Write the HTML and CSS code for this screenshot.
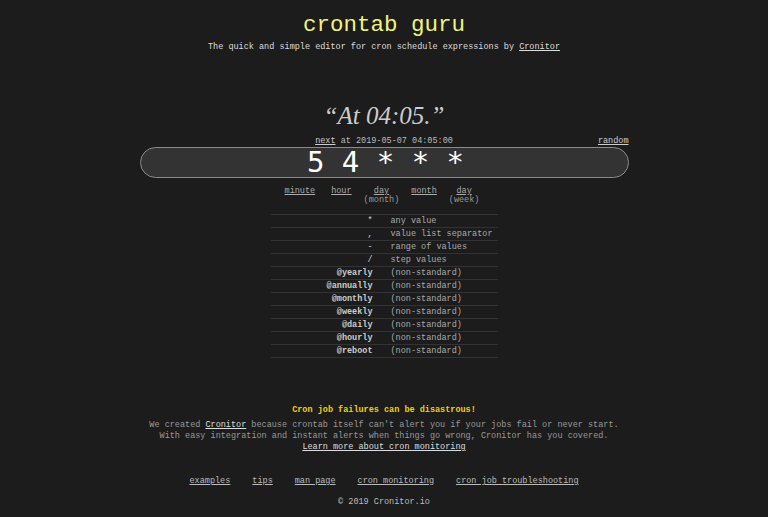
FILE: index.html
```html
<!DOCTYPE html>
<html>
<head>
<meta charset="utf-8">
<link rel="stylesheet" href="styles.css">
</head>
<body>
<header class="header">
  <h1 class="title">crontab guru</h1>
  <p class="subtitle">The quick and simple editor for cron schedule expressions by <a href="#">Cronitor</a></p>
</header>
<main class="editor">
  <div class="quote">“At 04:05.”</div>
  <div class="nextline">
    <span></span>
    <span class="next"><a href="#">next</a> at 2019-05-07 04:05:00</span>
    <a class="random" href="#">random</a>
  </div>
  <div class="inputbox">5 4 * * *</div>
  <div class="parts">
    <div class="part part-minute"><a href="#">minute</a></div>
    <div class="part"><a href="#">hour</a></div>
    <div class="part"><a href="#">day</a><br>(month)</div>
    <div class="part"><a href="#">month</a></div>
    <div class="part"><a href="#">day</a><br>(week)</div>
  </div>
  <table class="legend">
    <tr><td class="sym">*</td><td class="desc">any value</td></tr>
    <tr><td class="sym">,</td><td class="desc">value list separator</td></tr>
    <tr><td class="sym">-</td><td class="desc">range of values</td></tr>
    <tr><td class="sym">/</td><td class="desc">step values</td></tr>
    <tr><td class="sym kw">@yearly</td><td class="desc">(non-standard)</td></tr>
    <tr><td class="sym kw">@annually</td><td class="desc">(non-standard)</td></tr>
    <tr><td class="sym kw">@monthly</td><td class="desc">(non-standard)</td></tr>
    <tr><td class="sym kw">@weekly</td><td class="desc">(non-standard)</td></tr>
    <tr><td class="sym kw">@daily</td><td class="desc">(non-standard)</td></tr>
    <tr><td class="sym kw">@hourly</td><td class="desc">(non-standard)</td></tr>
    <tr><td class="sym kw">@reboot</td><td class="desc">(non-standard)</td></tr>
  </table>
</main>
<section class="promo">
  <p class="promo-title">Cron job failures can be disastrous!</p>
  <p class="promo-text">We created <a href="#">Cronitor</a> because crontab itself can't alert you if your jobs fail or never start.<br>With easy integration and instant alerts when things go wrong, Cronitor has you covered.<br><a href="#">Learn more about cron monitoring</a></p>
</section>
<footer class="footer">
  <nav class="footer-links">
    <a href="#">examples</a>
    <a href="#">tips</a>
    <a href="#">man page</a>
    <a href="#">cron monitoring</a>
    <a href="#">cron job troubleshooting</a>
  </nav>
  <p class="copyright">© 2019 Cronitor.io</p>
</footer>
</body>
</html>
```

FILE: styles.css
```css
html, body {
  margin: 0;
  padding: 0;
}
body {
  background: #1c1c1c;
  color: #ddd;
  font-family: "Liberation Mono", "Courier New", monospace;
  font-size: 8.5px;
  line-height: 11px;
  text-align: center;
}
a {
  color: #ddd;
  text-decoration: underline;
}
p { margin: 0; }

.header {
  padding-top: 12px;
}
.title {
  margin: 0;
  font-size: 22.5px;
  line-height: 26px;
  font-weight: normal;
  color: #f3f37a;
}
.subtitle {
  margin-top: 3.5px;
  color: #ddd;
}

.editor {
  width: 489px;
  margin: 0 auto;
}
.quote {
  margin-top: 47.5px;
  font-family: "Liberation Serif", "Times New Roman", serif;
  font-style: italic;
  font-size: 25px;
  line-height: 32px;
  color: #ccc;
}
.nextline {
  margin-top: 3.5px;
  display: grid;
  grid-template-columns: 1fr auto 1fr;
  color: #bbb;
}
.next a { color: #ccc; }
.random {
  justify-self: end;
  color: #ccc;
}
.inputbox {
  margin-top: 0.5px;
  height: 29px;
  border: 1px solid #8a8a8a;
  border-radius: 16px;
  background: #333;
  color: #fff;
  font-family: "DejaVu Sans Mono", monospace;
  font-size: 29px;
  line-height: 29px;
  text-align: center;
  padding-left: 3px;
}
.parts {
  margin-top: 9px;
  display: flex;
  justify-content: center;
  gap: 12px;
  line-height: 9px;
  color: #999;
  padding-right: 4px;
}
.part a { color: #aaa; }
.part-minute { margin-right: 4px; }

.legend {
  margin: 9px auto 0;
  width: 227px;
  border-collapse: collapse;
  color: #aaa;
}
.legend td {
  border-top: 1px solid #333;
  border-bottom: 1px solid #333;
  height: 12px;
  padding: 0;
  line-height: 12px;
  white-space: nowrap;
}
.legend .sym {
  width: 102px;
  text-align: right;
  padding-right: 0;
  color: #ccc;
}
.legend .kw {
  font-weight: bold;
}
.legend .desc {
  text-align: left;
  padding-left: 18px;
}

.promo {
  margin-top: 47px;
}
.promo-title {
  color: #f0d000;
  font-weight: bold;
}
.promo-text {
  margin-top: 4px;
  color: #999;
}
.promo-text a { color: #ddd; }

.footer {
  margin-top: 23px;
}
.footer-links {
  display: flex;
  justify-content: center;
  gap: 22px;
}
.footer-links a { color: #bbb; }
.copyright {
  margin-top: 10px;
  color: #bbb;
}
```
